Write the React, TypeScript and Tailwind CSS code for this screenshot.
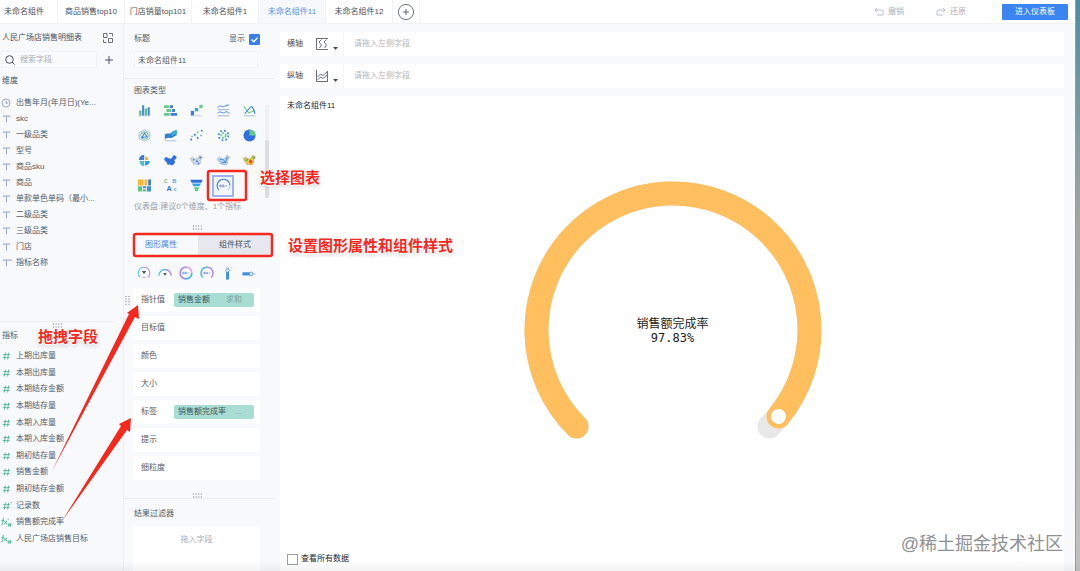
import { useState, type ReactNode } from "react";
import clsx from "clsx";

const tabs = ["未命名组件", "商品销售top10", "门店销量top101", "未命名组件1", "未命名组件11", "未命名组件12"];

const dimensions = [
  { name: "出售年月(年月日)(Ye...", type: "time" },
  { name: "skc", type: "text" },
  { name: "一级品类", type: "text" },
  { name: "型号", type: "text" },
  { name: "商品sku", type: "text" },
  { name: "商品", type: "text" },
  { name: "单款单色单码（最小...", type: "text" },
  { name: "二级品类", type: "text" },
  { name: "三级品类", type: "text" },
  { name: "门店", type: "text" },
  { name: "指标名称", type: "textStar" },
];

const metrics = [
  { name: "上期出库量", type: "num" },
  { name: "本期出库量", type: "num" },
  { name: "本期结存金额", type: "num" },
  { name: "本期结存量", type: "num" },
  { name: "本期入库量", type: "num" },
  { name: "本期入库金额", type: "num" },
  { name: "期初结存量", type: "num" },
  { name: "销售金额", type: "num" },
  { name: "期初结存金额", type: "num" },
  { name: "记录数", type: "numStar" },
  { name: "销售额完成率", type: "fxStar" },
  { name: "人民广场店销售目标", type: "fx" },
];

const attributes = [
  { label: "指针值", field: "销售金额", extra: "求和" },
  { label: "目标值" },
  { label: "颜色" },
  { label: "大小" },
  { label: "标签", field: "销售额完成率", extra: "..." },
  { label: "提示" },
  { label: "细粒度" },
];

function FieldIcon({ type }: { type: string }) {
  if (type === "time") {
    return (
      <svg viewBox="0 0 12 12" className="h-3 w-3 shrink-0" fill="none" stroke="#7f90bd">
        <circle cx="6" cy="6" r="4" strokeWidth="0.8" />
        <path d="M6 3.6V6.2H8" strokeWidth="0.8" />
      </svg>
    );
  }
  if (type === "text" || type === "textStar") {
    return (
      <svg viewBox="0 0 12 12" className="h-3 w-3 shrink-0" fill="none" stroke="#8c9cc4">
        <path d="M3.4 4V3H9.6V4M6.5 3V9.4" strokeWidth="0.9" />
        {type === "textStar" && <path d="M11 2.2V3.8" strokeWidth="0.9" />}
      </svg>
    );
  }
  if (type === "num" || type === "numStar") {
    return (
      <svg viewBox="0 0 12 12" className="h-3 w-3 shrink-0" fill="none" stroke="#3fb28c">
        <path d="M5.4 2.6L4.4 9.6M8.6 2.6L7.6 9.6M3.2 4.6H10M2.8 7.6H9.6" strokeWidth="0.8" />
        {type === "numStar" && <path d="M11.2 2V3.4" strokeWidth="0.9" />}
      </svg>
    );
  }
  return (
    <svg viewBox="0 0 12 12" className="h-3 w-3 shrink-0" fill="none" stroke="#3fb28c" strokeWidth="0.9">
      <path d="M4.2 2C2.8 1.8 3.1 3.4 2.9 5.2S2.4 9.2 1.2 9M1.4 4.6H4.2M4.4 4.8L7 8.4M7 4.8L4.2 8.4" />
      <path d="M9 7.2L8.6 10.6M10.8 7.2L10.4 10.6M7.8 8.2H11.6M7.6 9.7H11.4" strokeWidth="0.7" />
      {type === "fxStar" && <path d="M8.2 2.6V3.8" />}
    </svg>
  );
}

const chinaPath = "M0.8 5.5L3 4L5 5.5L8 6.4L10.4 5L11 3L12.4 1.8L15.2 3.6L14 6.2L12 7.4L13.2 10L11.4 13L9 13.4L7 12.4L4.6 12.6L3.6 9.8L1.4 8.2Z";

const chartIcons: { name: string; art: ReactNode }[] = [
  {
    name: "柱形图",
    art: (
      <>
        <path d="M0.5 14.5H15.5" stroke="#b9c6dc" />
        <path d="M1.5 8H4.2V14H1.5ZM8.4 5.5H11V14H8.4Z" fill="#52c08c" />
        <path d="M5 1.5H7.6V14H5ZM11.8 4H14.5V14H11.8Z" fill="#4a8ad8" />
      </>
    ),
  },
  {
    name: "条形图",
    art: (
      <>
        <path d="M0 1.5H6V5H0ZM3 6.2H9V9.8H3ZM0 11H7V14.5H0Z" fill="#67c98b" />
        <path d="M7 1.5H11V5H7ZM10 6.2H13.5V9.8H10ZM8 11H16V14.5H8Z" fill="#3e7fdc" />
      </>
    ),
  },
  {
    name: "瀑布图",
    art: (
      <>
        <path d="M1 14.5H15" stroke="#b9c6dc" />
        <path d="M1 8.5H5V14H1Z" fill="#3e7fdc" />
        <path d="M6 5H10V9H6Z" fill="#35a5e0" />
        <path d="M11.5 1H15.5V5H11.5Z" fill="#67c98b" />
      </>
    ),
  },
  {
    name: "折线图",
    art: (
      <g fill="none" strokeWidth="1.2">
        <path d="M1 4.5C4 0 6 4.5 9 3S13 1 15 1.5M1 11.5C4 7.5 6 12 9 10.5S13 9 15 12" stroke="#3e7fdc" />
        <path d="M1 7H15M1 14.5H15" stroke="#9db2cc" />
      </g>
    ),
  },
  {
    name: "组合图",
    art: (
      <g fill="none" strokeWidth="1.3">
        <path d="M1 3L7 11L14.5 8" stroke="#67c98b" />
        <path d="M2 12L9 4C12 1 13 8 15 12" stroke="#3e7fdc" />
        <path d="M1 14.5H15" stroke="#9db2cc" strokeWidth="1" />
      </g>
    ),
  },
  {
    name: "雷达图",
    art: (
      <g fill="none">
        <path d="M8 0.8L14.6 4.4V11.6L8 15.2L1.4 11.6V4.4Z" stroke="#9db2cc" />
        <circle cx="8" cy="8" r="4.6" stroke="#52c08c" strokeWidth="1.2" />
        <path d="M8 5L11 9.5L5 10.5Z" stroke="#3e7fdc" strokeWidth="1.3" />
      </g>
    ),
  },
  {
    name: "面积图",
    art: (
      <>
        <path d="M1 7C4 4 7 7 9 4.5S13 3 15.5 1V8C12 8 11 12 7 11S3 12 1 12.5Z" fill="#2f7fd6" />
        <path d="M9 4.5C11 3 13 3 15.5 1V6C12 6 11 9 9 9Z" fill="#35b0dc" />
        <path d="M1 14.5H15" stroke="#9db2cc" />
      </>
    ),
  },
  {
    name: "散点图",
    art: (
      <>
        <g fill="#3e7fdc">
          <circle cx="1.5" cy="13" r="1.2" />
          <circle cx="6" cy="7" r="1.2" />
          <circle cx="9.5" cy="11" r="1.2" />
          <circle cx="14.5" cy="2" r="1.2" />
        </g>
        <g fill="#5fc5b0">
          <circle cx="2.5" cy="9" r="1.1" />
          <circle cx="9.5" cy="4" r="1.1" />
          <circle cx="13.5" cy="8" r="1.1" />
        </g>
      </>
    ),
  },
  {
    name: "聚合气泡图",
    art: (
      <>
        <circle cx="8" cy="8" r="6" fill="none" stroke="#3e8fdc" strokeWidth="2.2" strokeDasharray="2.2 2.5" />
        <circle cx="8" cy="8" r="2.8" fill="none" stroke="#67c9a0" strokeWidth="2.2" strokeDasharray="2.2 1.3" />
      </>
    ),
  },
  {
    name: "饼图",
    art: (
      <>
        <circle cx="8" cy="8" r="7.4" fill="#2f6fe0" />
        <path d="M8 8V0.6A7.4 7.4 0 0 1 15.4 8Z" fill="#5fcf86" />
      </>
    ),
  },
  {
    name: "玫瑰图",
    art: (
      <>
        <path d="M7.5 7.5H1A6.5 6.5 0 0 1 7.5 1Z" fill="#3e7fdc" />
        <path d="M8.5 7.5V3A5 5 0 0 1 13 7.5Z" fill="#f0b640" />
        <path d="M8.5 8.5H14.5A6 6 0 0 1 8.5 14Z" fill="#2f9fe0" />
        <path d="M7.5 8.5V15A6.5 6.5 0 0 1 2 8.5Z" fill="#4fbfc8" />
      </>
    ),
  },
  { name: "区域地图", art: <path d={chinaPath} fill="#2f6fe0" stroke="#2f6fe0" strokeLinejoin="round" /> },
  {
    name: "点地图",
    art: (
      <>
        <path d={chinaPath} fill="#d3dae8" stroke="#a8b4cc" />
        <g fill="#3e6fd0">
          <circle cx="4.5" cy="7" r="1" />
          <circle cx="8.5" cy="9" r="1.2" />
          <circle cx="12.6" cy="4.5" r="1" />
          <circle cx="10.5" cy="11.5" r="1" />
        </g>
      </>
    ),
  },
  {
    name: "流向地图",
    art: (
      <>
        <path d={chinaPath} fill="#b6d3ea" stroke="#9cb6d4" />
        <path d="M3.5 7Q8 5 10.5 10.5M12.6 4L10.5 10.5M6 10.5H10.5" stroke="#2f80d8" fill="none" />
      </>
    ),
  },
  {
    name: "热力地图",
    art: (
      <>
        <path d={chinaPath} fill="#f3cf48" stroke="#b99a5a" />
        <circle cx="4.6" cy="7.4" r="1.6" fill="#58b868" />
        <circle cx="9.4" cy="9.4" r="2.2" fill="#e4552f" />
        <circle cx="12.8" cy="4.4" r="1.4" fill="#58b868" />
      </>
    ),
  },
  {
    name: "矩形树图",
    art: (
      <>
        <path d="M0 0.5H7V8H0ZM8 0.5H11.5V8H8Z" fill="#f3bb35" />
        <path d="M12.5 0.5H16V8H12.5Z" fill="#3e7fdc" />
        <path d="M0 9H5V15.5H0ZM6 12.5H10V15.5H6Z" fill="#5fc583" />
        <path d="M6 9H10V11.5H6ZM11 9H16V15.5H11Z" fill="#3e8fdc" />
      </>
    ),
  },
  {
    name: "词云",
    art: (
      <g fontFamily="Liberation Sans, sans-serif" fontWeight="bold">
        <text x="0" y="5" fontSize="6" fill="#5fc583">C</text>
        <text x="10" y="5" fontSize="7" fill="#3eb0dc">B</text>
        <text x="3" y="15" fontSize="9" fill="#2f6fe0">A</text>
        <text x="12" y="15" fontSize="6" fill="#3eb0dc">c</text>
      </g>
    ),
  },
  {
    name: "漏斗图",
    art: (
      <>
        <path d="M0.5 1H15.5L14.2 4.5H1.8Z" fill="#2f6fe0" />
        <path d="M2.4 5.5H13.6L11.8 9H4.2Z" fill="#35a5e0" />
        <path d="M4.8 10H11.2L9.5 15H6.5Z" fill="#5fcf86" />
      </>
    ),
  },
];

const gaugeStyles: { name: string; art: ReactNode }[] = [
  {
    name: "多指针仪表盘",
    art: (
      <>
        <path d="M3.6 12.8A6.5 6.5 0 0 1 8 1.5" stroke="#58c4ea" strokeWidth="1.2" />
        <path d="M8 1.5A6.5 6.5 0 0 1 12.4 12.8" stroke="#b884ea" strokeWidth="1.2" />
        <path d="M5.5 5.8L8 9.5L10.5 5.8Z" fill="#4a5675" />
        <path d="M6.5 13H9.5" stroke="#b884ea" />
      </>
    ),
  },
  {
    name: "180度仪表盘",
    art: (
      <>
        <path d="M1 11A7 7 0 0 1 8 4" stroke="#58c4ea" strokeWidth="1.5" />
        <path d="M8 4A7 7 0 0 1 15 11" stroke="#b884ea" strokeWidth="1.5" />
        <path d="M6 8L8 11.5L10 8Z" fill="#4a5675" />
      </>
    ),
  },
  {
    name: "360度仪表盘",
    art: (
      <>
        <path d="M8 1.3A6.7 6.7 0 0 0 8 14.7" stroke="#a98af2" strokeWidth="1.9" />
        <path d="M8 14.7A6.7 6.7 0 0 0 14.7 8" stroke="#48b8ea" strokeWidth="1.9" />
        <path d="M8 1.3A6.7 6.7 0 0 1 14.7 8" stroke="#e3a6e6" strokeWidth="1.9" />
        <path d="M4.2 7.2H5.8V9H4.2ZM7 7.2H8.6V9H7ZM9.8 9L11.6 7.2" stroke="#5f8fe8" strokeWidth="0.8" />
      </>
    ),
  },
  {
    name: "百分比仪表盘",
    art: (
      <>
        <path d="M3.4 13.2A6.7 6.7 0 0 1 8 1.5" stroke="#48b8ea" strokeWidth="1.7" />
        <path d="M8 1.5A6.7 6.7 0 0 1 12.6 13.2" stroke="#b48af0" strokeWidth="1.7" />
        <path d="M4.2 7.2H5.8V9H4.2ZM7 7.2H8.6V9H7ZM9.8 9L11.6 7.2" stroke="#6a8fe8" strokeWidth="0.8" />
      </>
    ),
  },
  {
    name: "竖向试管",
    art: (
      <>
        <path d="M6.5 0.5H8.5V3.5H6.5Z" fill="#c6d2e2" />
        <path d="M5.8 6.5H9.2V15.5H5.8Z" fill="#3e8fe0" />
        <circle cx="7.5" cy="5" r="2" fill="#fff" stroke="#4a8ad8" />
        <path d="M11 2H13M11 5H12" stroke="#b4c2d6" />
      </>
    ),
  },
  {
    name: "横向试管",
    art: (
      <>
        <path d="M0.5 7.2H9V10.8H0.5Z" fill="#3e8fe0" />
        <path d="M12 8H15.5V10H12Z" fill="#c6d2e2" />
        <circle cx="10.5" cy="9" r="2" fill="#fff" stroke="#4a8ad8" />
      </>
    ),
  },
];

function Grip({ className }: { className?: string }) {
  return (
    <svg viewBox="0 0 9 5" className={clsx("h-[5px] w-[9px]", className)} stroke="#6b7280" strokeDasharray="1 1.6">
      <path d="M0 1H9M0 4H9" />
    </svg>
  );
}

function FieldList({ items, className }: { items: { name: string; type: string }[]; className?: string }) {
  return (
    <ul className={clsx("grid", className)}>
      {items.map((item) => (
        <li key={item.name} className="flex items-center gap-1 whitespace-nowrap">
          <FieldIcon type={item.type} />
          <span>{item.name}</span>
        </li>
      ))}
    </ul>
  );
}

function TopBar() {
  const [active, setActive] = useState("未命名组件11");
  return (
    <header className="flex h-6 shrink-0 items-stretch border-b border-[#f1f2f5] bg-white">
      <nav className="flex">
        {tabs.map((tab, index) => (
          <button
            key={tab}
            onClick={() => setActive(tab)}
            className={clsx(
              "border-r border-[#f1f2f5] whitespace-nowrap",
              index === 0 ? "w-[58px] pr-[9px]" : "w-[67px]",
              tab === active ? "bg-[#f6f8fa] text-[#5a93ee]" : "text-[#4a4f5a]"
            )}
          >
            {tab}
          </button>
        ))}
        <button aria-label="添加组件" className="flex w-[27px] items-center justify-center border-r border-[#f6f7f9]">
          <svg viewBox="0 0 18 18" className="h-[18px] w-[18px]" fill="none" stroke="#5f646e">
            <circle cx="9" cy="9" r="7.6" strokeWidth="0.9" />
            <path d="M9 6V12M6 9H12" />
          </svg>
        </button>
      </nav>
      <div className="ml-auto flex items-center pr-[7px] text-[#aab0ba]">
        <button className="flex items-center gap-1">
          <svg viewBox="0 0 10 10" className="h-[10px] w-[10px]" fill="none" stroke="currentColor" strokeWidth="0.8">
            <path d="M3 1L1 3L3 5M1 3H7.5Q9 3 9 4.5V8H3" />
          </svg>
          撤销
        </button>
        <button className="ml-8 flex items-center gap-1">
          <svg viewBox="0 0 10 10" className="h-[10px] w-[10px]" fill="none" stroke="currentColor" strokeWidth="0.8">
            <path d="M7 1L9 3L7 5M9 3H2.5Q1 3 1 4.5V8H7" />
          </svg>
          还原
        </button>
        <button className="ml-9 h-4 w-[66px] rounded-[1px] bg-[#3a85f0] text-white">进入仪表板</button>
      </div>
    </header>
  );
}

function DataPanel() {
  return (
    <aside className="flex w-[123px] shrink-0 flex-col bg-[#f7f9fb]">
      <div className="mt-[6px] flex h-4 items-center justify-between pr-[9px] pl-[2px]">
        <span className="text-[#4a5060]">人民广场店销售明细表</span>
        <button aria-label="切换数据">
          <svg viewBox="0 0 12 12" className="h-3 w-3" fill="none" stroke="#5b616d" strokeWidth="0.9">
            <path d="M1.5 1.5H5V5.5H1.5ZM6.5 6.5H10.5V10.5H6.5ZM7 1.5H10.5V4.5M1.5 7.5V10.5H4.5" />
          </svg>
        </button>
      </div>
      <div className="mt-[5px] flex h-[17px] items-center pr-[9px]">
        <label className="ml-px flex h-full w-24 items-center border border-[#f0f2f5] bg-[#fafbfc] pl-[2px]">
          <svg viewBox="0 0 12 12" className="h-3 w-3 shrink-0" fill="none" stroke="#4b5160">
            <circle cx="5.5" cy="5.5" r="3.8" />
            <path d="M8.3 8.3L10.6 10.6" />
          </svg>
          <input aria-label="搜索字段" placeholder="搜索字段" className="ml-1 w-full min-w-0 bg-transparent outline-none placeholder:text-[#a9afb8]" />
        </label>
        <button aria-label="添加字段" className="ml-auto">
          <svg viewBox="0 0 10 10" className="h-[10px] w-[10px]" stroke="#4b5160">
            <path d="M5 1V9M1 5H9" />
          </svg>
        </button>
      </div>
      <h2 className="mt-[5px] h-4 pl-[2px] leading-4 text-[#4a5060]">维度</h2>
      <FieldList items={dimensions} className="mt-[6px] auto-rows-[16px]" />
      <section className="mt-auto flex h-[250px] flex-col">
        <div className="mr-[9px] flex justify-center border-t border-[#e9ecf0] pt-px">
          <Grip />
        </div>
        <h2 className="h-4 pl-[2px] leading-4">指标</h2>
        <FieldList items={metrics} className="mt-1 mb-6 flex-1" />
      </section>
    </aside>
  );
}

function ConfigPanel() {
  const [tab, setTab] = useState("图形属性");
  return (
    <aside className="flex w-[151px] shrink-0 flex-col border-l border-[#eceef2] bg-[#f7f9fb]">
      <section className="border-b border-[#eceef2] pt-[7px] pr-[14px] pb-[10px] pl-[10px]">
        <div className="flex h-4 items-center justify-between">
          <label htmlFor="title">标题</label>
          <label className="flex items-center gap-1">
            显示
            <span className="relative flex">
              <input type="checkbox" defaultChecked className="peer h-[11px] w-[11px] appearance-none rounded-[1px] border border-[#3a7fe8] checked:bg-[#3a7fe8]" />
              <svg viewBox="0 0 11 11" className="pointer-events-none absolute inset-0 hidden h-[11px] w-[11px] peer-checked:block" fill="none" stroke="#fff" strokeWidth="1.4">
                <path d="M2.5 5.5L4.8 7.8L8.6 3.6" />
              </svg>
            </span>
          </label>
        </div>
        <input id="title" defaultValue="未命名组件11" className="mt-1 block h-[17px] w-[124px] border border-[#f0f2f5] bg-[#fafbfc] px-[3px] outline-none" />
      </section>

      <section className="pt-1">
        <h3 className="h-[15px] pl-[10px] leading-4">图表类型</h3>
        <div className="flex pr-[5px] pl-[7px]">
          <div className="grid flex-1 auto-rows-[25px] grid-cols-5">
            {chartIcons.map((icon) => (
              <button key={icon.name} aria-label={icon.name} className="flex items-center justify-center">
                <svg viewBox="0 0 16 16" className="h-[13px] w-[13px]">{icon.art}</svg>
              </button>
            ))}
            <button aria-label="仪表盘" className="flex h-[22px] w-[22px] items-center justify-center self-center justify-self-center border-2 border-[#9db5ee] bg-[#f3f6fd]">
              <svg viewBox="0 0 16 16" className="h-[15px] w-[15px]" fill="none">
                <path d="M3.2 13A6.8 6.8 0 1 1 14.8 8" stroke="#3f7fe0" strokeWidth="1.2" />
                <path d="M14.8 8A6.8 6.8 0 0 1 12.8 13" stroke="#c3cbe0" strokeWidth="1.2" />
                <path d="M4 7.5H5.5V9.5H4ZM7 7.5H8.5V9.5H7ZM10 9.5L11.8 7.5" stroke="#7c8fd8" strokeWidth="0.9" />
              </svg>
            </button>
          </div>
          <div className="mt-[7px] ml-[2px] flex w-1 flex-col justify-end bg-[#eff1f3]">
            <div className="h-[58px] rounded-[2px] bg-[#dadde1]" />
          </div>
        </div>
        <p className="h-[17px] pl-[10px] leading-[17px] whitespace-nowrap text-[#9aa0aa]">仪表盘:建议0个维度、1个指标</p>
      </section>

      <div className="mt-[6px] flex h-3 items-center pl-[69px]">
        <Grip />
      </div>
      <div className="flex h-[23px] pr-[2px] pl-[10px]">
        {["图形属性", "组件样式"].map((name) => (
          <button
            key={name}
            onClick={() => setTab(name)}
            className={clsx(
              name === "图形属性" ? "w-16 pr-[10px]" : "flex-1",
              name === tab ? "bg-[#f7f9fd] text-[#4a84ea]" : "bg-[#e6e8ee] text-[#4a5060]"
            )}
          >
            {name}
          </button>
        ))}
      </div>
      <div className="mr-[14px] ml-[9px] grid h-8 grid-cols-6 pt-[2px]">
        {gaugeStyles.map((style) => (
          <button key={style.name} aria-label={style.name} className="flex items-center justify-center">
            <svg viewBox="0 0 16 16" className="h-[14px] w-[14px]" fill="none">{style.art}</svg>
          </button>
        ))}
      </div>

      <div className="mr-[14px] ml-[9px] grid gap-1">
        {attributes.map((attr, index) => (
          <div key={attr.label} className="relative flex h-6 items-center bg-white pl-2">
            {index === 0 && <Grip className="absolute -left-[10px] rotate-90" />}
            <span className="w-[33px]">{attr.label}</span>
            {attr.field && (
              <button className="flex h-[14px] w-20 items-center rounded-[2px] bg-[#a9dcd3] pl-1 whitespace-nowrap text-[#3d5a5e]">
                {attr.field}
                <span className="ml-auto pr-3 text-[#7ba39f]">{attr.extra}</span>
              </button>
            )}
          </div>
        ))}
      </div>

      <div className="flex h-[18px] items-end pl-[69px]">
        <Grip />
      </div>
      <section className="flex flex-1 flex-col border-t border-[#eceef2] pt-[7px] pr-[14px] pl-[9px]">
        <h3 className="h-4 pl-px leading-4">结果过滤器</h3>
        <div className="mt-1 flex-1 bg-white pt-[6px] text-center leading-4 text-[#a9afb8]">拖入字段</div>
      </section>
    </aside>
  );
}

function AxisRow({ label, vertical }: { label: string; vertical?: boolean }) {
  return (
    <div className="flex h-6 items-center bg-white pl-[7px]">
      <span className="text-[#4a4f5a]">{label}</span>
      <button aria-label={`${label}设置`} className="ml-3 box-content flex h-full w-7 items-center gap-1 border-r border-[#f4f5f7]">
        <svg viewBox="0 0 14 14" className="h-[14px] w-[14px]" fill="none" stroke="#5b606b" strokeWidth="0.9">
          {vertical ? (
            <path d="M1.5 1V12.5H13M12.5 2V12M2.5 8L5.5 5L8 6.5L12 3M2.5 11L5.5 8L8 9.5L12 6" />
          ) : (
            <path d="M1.5 1V12.5H13M1.5 1.5H13M6.5 2.5L4 5L6.5 8L4.5 11M11.5 2.5L9 5L11.5 8L9.5 11" />
          )}
        </svg>
        <svg viewBox="0 0 5 3" className="mt-2 h-[3px] w-[5px]">
          <path d="M0 0H5L2.5 3Z" fill="#4a4f5a" />
        </svg>
      </button>
      <span className="ml-[10px] text-[#b3b7be]">请拖入左侧字段</span>
    </div>
  );
}

function GaugeChart() {
  return (
    <div className="relative flex flex-1 items-center justify-center pr-[6px] pb-[46px]">
      <svg viewBox="0 0 300 260" className="w-[300px]" fill="none" strokeWidth="24" strokeLinecap="round">
        <path d="M53.5 246.5A136.5 136.5 0 1 1 246.5 246.5" stroke="#e8e8e8" />
        <path d="M53.5 246.5A136.5 136.5 0 1 1 255.5 236.5" stroke="#ffbf5e" />
        <circle cx="255.5" cy="236.5" r="7.5" fill="#fff" />
      </svg>
      <div className="absolute inset-0 flex flex-col items-center justify-center pr-[6px] pb-1 text-[12px] leading-[14px] text-[#222]">
        <span>销售额完成率</span>
        <span className="font-['DejaVu_Sans_Mono',monospace]">97.83%</span>
      </div>
    </div>
  );
}

function Canvas() {
  return (
    <main className="flex min-w-0 flex-1 flex-col bg-[#f8f9fa] pt-2 pr-[11px] pl-[6px]">
      <div className="grid gap-2">
        <AxisRow label="横轴" />
        <AxisRow label="纵轴" vertical />
      </div>
      <section className="mt-2 flex flex-1 flex-col bg-white pl-[7px]">
        <h1 className="mt-[2px] h-4 leading-4 text-[#26282d]">未命名组件11</h1>
        <GaugeChart />
        <label className="mb-1 flex h-4 items-center gap-[3px] text-[#26282d]">
          <input type="checkbox" className="h-[11px] w-[11px] appearance-none border border-[#9a9ea6] bg-white checked:bg-[#3a7fe8]" />
          查看所有数据
        </label>
      </section>
    </main>
  );
}

const noteClass =
  "absolute text-[15px] leading-5 font-bold whitespace-nowrap text-[#f5281e] [text-shadow:0_1px_2px_#fff,1px_0_2px_#fff,-1px_0_2px_#fff,0_2px_4px_#bbb]";

function Annotations() {
  return (
    <div className="pointer-events-none absolute inset-0">
      <svg className="absolute inset-0 h-full w-full" fill="none" stroke="#f5281e">
        <rect x="208" y="171" width="38" height="29" rx="2" strokeWidth="2.5" />
        <rect x="134" y="234" width="138" height="22" rx="2" strokeWidth="2.5" />
        <path d="M52 471L129 314L127 313L138 305L139 319L135 317Z" fill="#f5281e" stroke="none" />
        <path d="M62 521L121 426L119 424L131 418L130 432L127 430Z" fill="#f5281e" stroke="none" />
      </svg>
      <span className={clsx(noteClass, "top-[168px] left-[260px]")}>选择图表</span>
      <span className={clsx(noteClass, "top-[236px] left-[288px]")}>设置图形属性和组件样式</span>
      <span className={clsx(noteClass, "top-[327px] left-[38px]")}>拖拽字段</span>
      <span className="absolute right-[17px] bottom-[15px] text-[18px] leading-6 whitespace-nowrap text-[#8f9195] [text-shadow:0_0_2px_#fff]">
        @稀土掘金技术社区
      </span>
      <div className="absolute inset-x-0 bottom-0 h-[10px] bg-linear-to-b from-transparent to-black/5" />
    </div>
  );
}

export default function App() {
  return (
    <div className="relative flex h-screen overflow-hidden bg-white font-['Liberation_Sans','Noto_Sans_CJK_SC',sans-serif] text-[8px] leading-3 text-[#555b68]">
      <div className="flex min-w-0 flex-1 flex-col">
        <TopBar />
        <div className="flex min-h-0 flex-1">
          <DataPanel />
          <ConfigPanel />
          <Canvas />
        </div>
      </div>
      <div className="w-[5px] shrink-0 border-l border-[#8fa0a6] bg-linear-to-b from-[#4d8ca3] via-[#a3a79f] via-40% to-[#c2c2c0]" />
      <Annotations />
    </div>
  );
}
